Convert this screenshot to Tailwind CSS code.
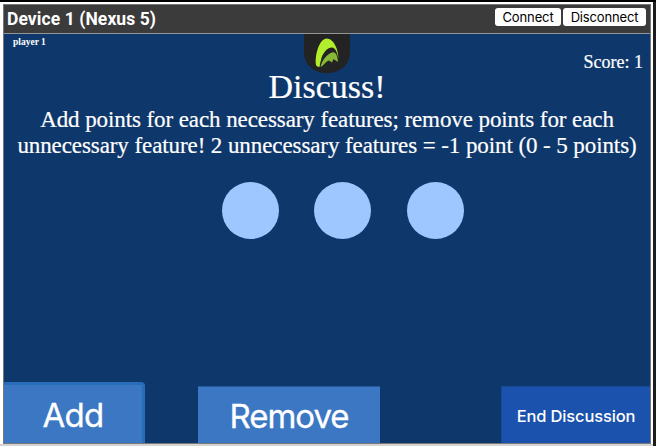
<!DOCTYPE html>
<html lang="en">
<head>
<meta charset="utf-8">
<title>Device 1</title>
<script src="https://cdn.jsdelivr.net/npm/@tailwindcss/browser@4"></script>
</head>
<body class="h-[446px] w-[656px] overflow-hidden border-t-2 border-black bg-[#1d1d1d] font-['Liberation_Serif',serif] text-white">
<div class="h-[444px] w-[653px] border-b-2 border-[#d4d4d4] bg-white pt-[2px] pl-[3px]">
  <main class="flex h-[440px] w-[648px] flex-col border border-[#777] bg-[#0e376b]">
    <header class="flex h-[29px] shrink-0 items-start justify-between border-b border-[#929696] bg-[#3b3b3b] pr-[4px] pl-[3px]">
      <h1 class="pt-[3px] font-['Roboto',sans-serif] text-[17.5px] leading-[22px] font-bold tracking-[0.08px] whitespace-nowrap">Device 1 (Nexus 5)</h1>
      <div class="flex gap-[2px] pt-[3px] font-['Inter',sans-serif] text-[13px] leading-[18px] text-black">
        <button class="h-[18px] w-[66px] rounded-[3px] bg-white tracking-[-0.1px] whitespace-nowrap">Connect</button>
        <button class="h-[18px] w-[83px] rounded-[3px] bg-white tracking-[-0.15px] whitespace-nowrap">Disconnect</button>
      </div>
    </header>
    <section class="flex grow flex-col">
      <div class="grid h-[37px] grid-cols-3">
        <p class="pt-[2px] pl-[9px] text-[9.5px] leading-[12px] font-bold">player 1</p>
        <div class="flex justify-center">
          <svg class="ml-px h-[39px] w-[46px] shrink-0" viewBox="0 0 46 39">
            <path d="M0 0H46V18C46 31 36 39 23 39S0 31 0 18Z" fill="#222322"/>
            <path d="M16.500 33C18 26 23 20 28 18.500C31.500 17.500 33.500 21 34 28L29.500 25L28 28.500L25 26.500C21.500 27.500 19.500 32 16.500 33Z" fill="#87b838"/>
            <path d="M12 31C10.500 22 15 5 22.500 4.500C30 4.500 34.500 16 34.500 25C33.500 19 31.500 13.500 28 13.500C23 13.500 18 20 17 26Q16 29 15.500 33Q12.500 33 12 31Z" fill="#b2ee2c"/>
          </svg>
        </div>
        <p class="pt-[18px] pr-[7px] text-right text-[18px] leading-[21px] [-webkit-text-stroke:0.2px_white]">Score: 1</p>
      </div>
      <h2 class="mt-[-3px] text-center text-[34px] leading-[38px] [-webkit-text-stroke:0.2px_white]">Discuss!</h2>
      <p class="mt-[1px] text-center text-[23px] leading-[26px] tracking-[-0.09px] whitespace-nowrap [-webkit-text-stroke:0.2px_white]">Add points for each necessary features; remove points for each<br>unnecessary feature! 2 unnecessary features = -1 point (0 - 5 points)</p>
      <div class="mt-[22.5px] flex gap-[35.5px] pl-[217.5px]">
        <div class="size-[57px] rounded-full bg-[#9fc7ff]"></div>
        <div class="size-[57px] rounded-full bg-[#9fc7ff]"></div>
        <div class="size-[57px] rounded-full bg-[#9fc7ff]"></div>
      </div>
      <div class="mt-auto flex items-end font-['Inter',sans-serif]">
        <button class="mr-[53px] h-[61px] w-[141px] rounded-tr-[4px] border-t-[3px] border-r-[3px] border-[#286dba] bg-[#3c77c3] pt-[3px] text-[33px] leading-none tracking-[-0.8px] [-webkit-text-stroke:0.3px_white]">Add</button>
        <button class="h-[57px] w-[182px] border-t border-[#28589c] bg-[#3c77c3] pt-[2px] text-[33px] leading-none tracking-[-1px] [-webkit-text-stroke:0.3px_white]">Remove</button>
        <button class="ml-auto h-[57px] w-[149px] border-t border-l border-[#174996] bg-[#1a52ad] pt-[2px] text-[16.5px] leading-none font-medium tracking-[-0.15px] whitespace-nowrap">End Discussion</button>
      </div>
    </section>
  </main>
</div>
</body>
</html>
